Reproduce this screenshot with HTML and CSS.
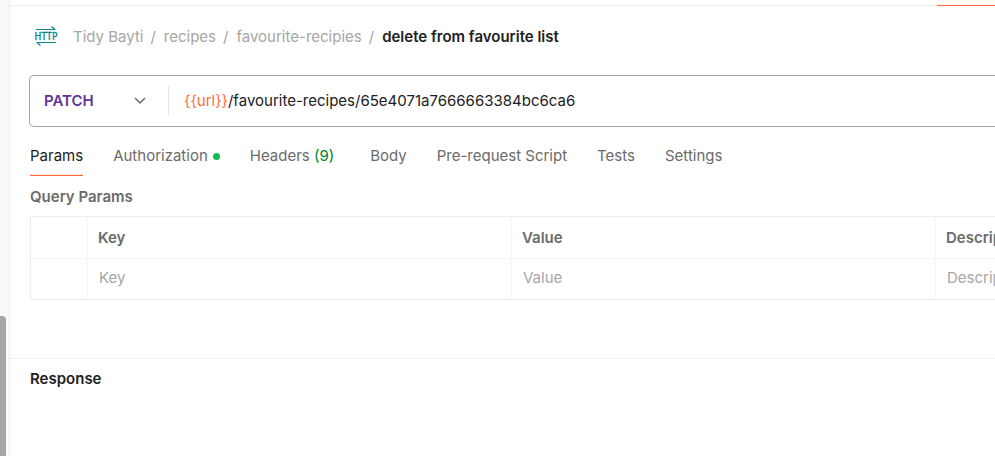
FILE: index.html
```html
<!DOCTYPE html>
<html lang="en">
<head>
  <meta charset="utf-8">
  <title>delete from favourite list</title>
  <link rel="stylesheet" href="styles.css">
</head>
<body>
  <div class="app">
    <aside class="sidebar"><div class="scroll-thumb"></div></aside>
    <main class="workspace">
      <div class="tab-strip"><div class="tab-strip-active"></div></div>
      <section class="request">
        <nav class="breadcrumb" aria-label="Breadcrumb">
          <svg class="http-icon" viewBox="0 0 22 22" aria-hidden="true">
            <path d="M1 3.500H20.500M16.500 0.500L20 3.500M21 16.500H1.500M5.500 19.500L2 16.500" />
            <text x="11" y="14" text-anchor="middle">HTTP</text>
          </svg>
          <a href="#">Tidy Bayti</a><span class="slash">/</span>
          <a href="#">recipes</a><span class="slash">/</span>
          <a href="#">favourite-recipies</a><span class="slash">/</span>
          <span class="current">delete from favourite list</span>
        </nav>
        <form class="url-bar">
          <div class="method">
            <select aria-label="Method"><option>PATCH</option><option>GET</option><option>POST</option><option>DELETE</option></select>
            <svg class="chevron" viewBox="0 0 12 8" aria-hidden="true"><path d="M1 1L6 6L11 1" /></svg>
          </div>
          <label class="variable" for="url">{{url}}</label>
          <input class="url" id="url" type="text" value="/favourite-recipes/65e4071a7666663384bc6ca6">
        </form>
        <div class="tabs" role="tablist">
          <button class="tab active" role="tab" aria-selected="true">Params</button>
          <button class="tab" role="tab">Authorization<span class="dot"></span></button>
          <button class="tab headers" role="tab">Headers <span class="count">(9)</span></button>
          <button class="tab" role="tab">Body</button>
          <button class="tab" role="tab">Pre-request Script</button>
          <button class="tab" role="tab">Tests</button>
          <button class="tab" role="tab">Settings</button>
        </div>
        <h2 class="params-title">Query Params</h2>
        <table class="params">
          <colgroup><col class="col-check"><col class="col-field"><col class="col-field"><col class="col-field"></colgroup>
          <thead>
            <tr><th></th><th>Key</th><th>Value</th><th>Description</th></tr>
          </thead>
          <tbody>
            <tr>
              <td></td>
              <td><input type="text" placeholder="Key" aria-label="Key"></td>
              <td><input type="text" placeholder="Value" aria-label="Value"></td>
              <td><input type="text" placeholder="Description" aria-label="Description"></td>
            </tr>
          </tbody>
        </table>
      </section>
      <section class="response"><h2>Response</h2></section>
    </main>
  </div>
</body>
</html>
```
FILE: styles.css
```css
* { box-sizing: border-box; }

body {
  margin: 0;
  background: #fff;
  color: #212121;
  font: 15px/20px Inter, sans-serif;
}

button, input, select { font: inherit; }

h2 { margin: 0; font-size: 15px; font-weight: 600; }

.app { display: flex; min-height: 100vh; overflow: hidden; }

.sidebar {
  display: flex;
  align-items: flex-end;
  flex: none;
  width: 10px;
  background: #f9f9f9;
  border-right: 1px solid #ededed;
}

.scroll-thumb {
  width: 6px;
  height: 140px;
  background: #a6a6a6;
  border-radius: 0 4px 0 0;
}

.workspace { flex: 1; min-width: 0; }

.tab-strip {
  display: flex;
  align-items: flex-end;
  justify-content: flex-end;
  height: 6px;
  background: linear-gradient(#ededed, #ededed) bottom / 100% 1px no-repeat;
}

.tab-strip-active { width: 58px; height: 1px; background: #ff6c37; }

.request { padding: 20px 0 58px 20px; }

.breadcrumb {
  display: flex;
  align-items: center;
  height: 22px;
  padding-left: 5px;
  color: #a6a6a6;
}

.breadcrumb a { color: inherit; text-decoration: none; }

.slash { margin: 0 8px 0 7px; }

.current { color: #212121; font-weight: 600; }

.http-icon { width: 22px; height: 22px; margin-right: 16px; overflow: visible; }

.http-icon path { fill: none; stroke: #0b8494; stroke-width: 1.2; }

.http-icon text {
  fill: #0b8494;
  stroke: #0b8494;
  stroke-width: 0.3px;
  font: condensed 10px "DejaVu Sans Condensed", "DejaVu Sans", sans-serif;
}

.url-bar {
  display: flex;
  align-items: center;
  height: 52px;
  margin: 27px 0 0 -1px;
  border: 1px solid #a6a6a6;
  border-right: 0;
  border-radius: 5px 0 0 5px;
}

.method {
  display: flex;
  align-items: center;
  width: 139px;
  height: 30px;
  padding-left: 14px;
  border-right: 1px solid #e6e6e6;
}

.method select {
  width: 90px;
  padding: 0;
  appearance: none;
  border: 0;
  background: none;
  color: #623497;
  font-weight: 600;
}

.chevron { width: 12px; height: 8px; }

.chevron path { fill: none; stroke: #6b6b6b; stroke-width: 1.5; }

.variable { padding-left: 15px; color: #ff6c37; }

.url {
  flex: 1;
  min-width: 0;
  padding: 0;
  border: 0;
  outline: 0;
  color: #212121;
}

.tabs { display: flex; gap: 30px; margin-top: 19px; }

.tab {
  display: flex;
  align-items: center;
  height: 30px;
  padding: 0 0 9px;
  border: 0;
  border-bottom: 1px solid transparent;
  background: none;
  color: #6b6b6b;
  white-space: pre;
}

.tab.active {
  border-color: #ff6c37;
  box-shadow: inset 0 -1px #ffe5dc;
  color: #212121;
}

.tab.headers { padding-right: 6px; }

.dot {
  width: 7px;
  height: 7px;
  margin-left: 5px;
  border-radius: 50%;
  background: #0cbb52;
}

.count { color: #007f31; }

.params-title { margin-top: 11px; color: #6b6b6b; }

.params {
  width: 1330px;
  margin-top: 9px;
  table-layout: fixed;
  border-collapse: collapse;
  border: 1px solid #ededed;
}

.col-check { width: 57px; }

.params th, .params td {
  height: 41px;
  padding: 0 10px;
  border: 1px solid #f5f5f5;
  text-align: left;
}

.params th { height: 42px; color: #6b6b6b; font-weight: 600; }

.params td { padding-bottom: 2px; }

.params tr > :first-child { border-left-color: #ededed; }

.params thead th { border-top-color: #ededed; }

.params tbody td { border-bottom-color: #ededed; }

.params td input {
  width: 100%;
  padding: 0 1px;
  border: 0;
  outline: 0;
  background: none;
}

.params input::placeholder { color: #a6a6a6; opacity: 1; }

.response { padding: 10px 20px; border-top: 1px solid #ededed; }
```
